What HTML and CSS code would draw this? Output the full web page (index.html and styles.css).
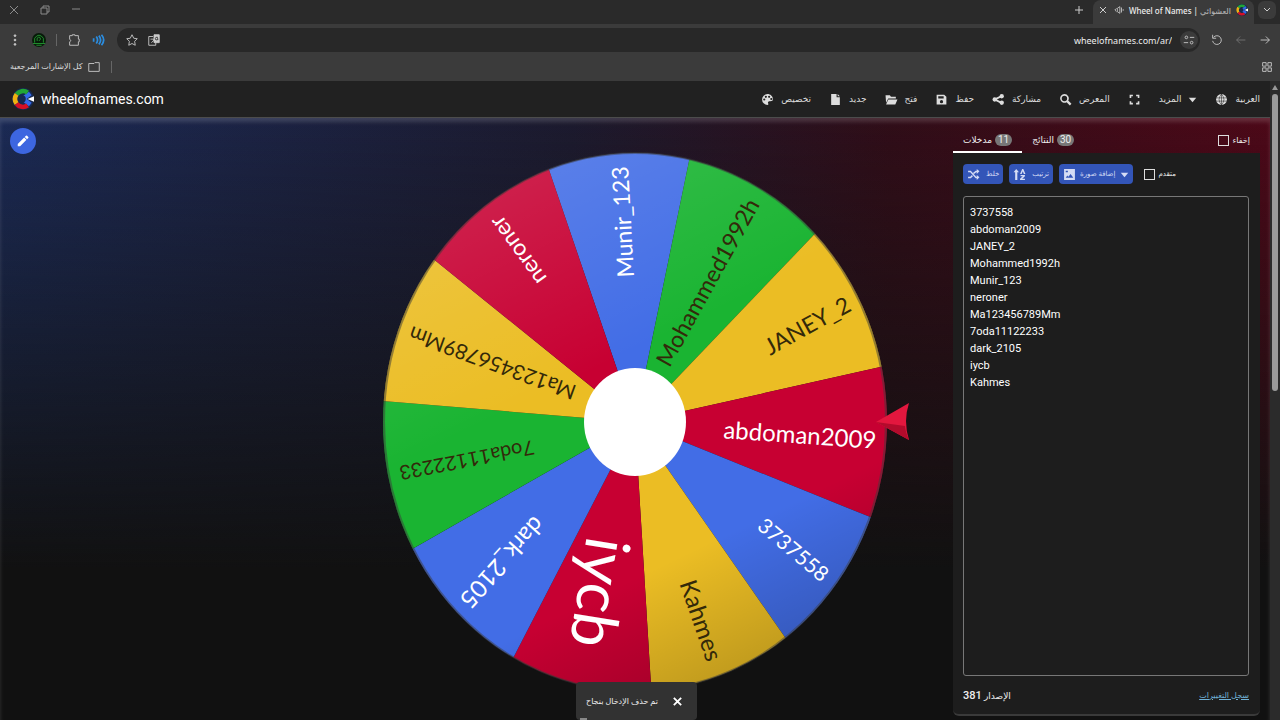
FILE: index.html
```html
<!DOCTYPE html>
<html lang="ar">

<head>
    <meta charset="UTF-8">
    <meta name="viewport" content="width=device-width, initial-scale=1.0">
    <title>Wheel of Names</title>
    <link rel="stylesheet" href="styles.css">
</head>

<body>
    <svg class="defs" aria-hidden="true">
        <symbol id="logo" viewBox="0 0 24 24">
            <circle cx="12" cy="12" r="12" fill="#16294f" />
            <g fill="none" stroke-width="5">
                <path d="M12 12l8 6" stroke="#3369e8" />
                <path d="M13 11l7-5" stroke="#3369e8" />
                <path d="M5 7A8.500 8.500 0 0 1 17 5" stroke="#22a637" />
                <path d="M5 17a8.500 8.500 0 0 1 0-10" stroke="#eeb211" />
                <path d="M17 19A8.500 8.500 0 0 1 5 17" stroke="#d50f25" />
            </g>
            <circle cx="11" cy="12" r="4" fill="#16294f" />
            <path d="M17 12l7-3v6z" fill="#fff" />
        </symbol>
    </svg>

    <!-- Browser window -->
    <div class="tab-strip">
        <div class="window-buttons">
            <button aria-label="Close window"><svg viewBox="0 0 12 12"><path d="M2 2l8 8M10 2l-8 8" /></svg></button>
            <button aria-label="Restore window"><svg viewBox="0 0 12 12"><path d="M2 4h6v6H2zM4 4V2h6v6H8" /></svg></button>
            <button aria-label="Minimize window"><svg viewBox="0 0 12 12"><path d="M2 5h8" /></svg></button>
        </div>
        <button class="new-tab" aria-label="New tab"><svg viewBox="0 0 12 12"><path d="M6 2v8M2 6h8" /></svg></button>
        <div class="tab">
            <button aria-label="Close tab"><svg viewBox="0 0 12 12"><path d="M3 3l6 6M9 3l-6 6" /></svg></button>
            <svg class="tab-sound" viewBox="0 0 12 12"><path d="M3 4L1 6l2 2M4 4v4l3 2V2zM9 3v6M11 5v2" /></svg>
            <span class="tab-title" dir="ltr">Wheel of Names | <bdi class="fade">العشوائي</bdi></span>
            <svg class="favicon"><use href="#logo" /></svg>
        </div>
        <button class="tab-menu" aria-label="Search tabs"><svg viewBox="0 0 12 12"><path d="M3 4l3 3 3-3" /></svg></button>
    </div>

    <div class="toolbar">
        <button aria-label="Menu"><svg viewBox="0 0 16 16"><g class="solid"><circle cx="8" cy="3" r="1" /><circle cx="8" cy="8" r="1" /><circle cx="8" cy="13" r="1" /></g></svg></button>
        <button class="avatar" aria-label="Profile"><svg viewBox="0 0 16 16"><circle cx="8" cy="8" r="8" fill="#071b09" stroke="none" /><path d="M3 11V6q5-7 10 0v5M6 9q-1-5 3-4 2 2-1 4M1 12h14M5 14h6" stroke="#239a31" /></svg></button>
        <span class="separator"></span>
        <button aria-label="Extensions"><svg viewBox="0 0 16 16"><path d="M3 3h3V2h3v1h4v4h1v3h-1v4H3v-4q3-1 0-3z" /></svg></button>
        <button class="volume" aria-label="Volume extension"><svg viewBox="0 0 16 16"><path d="M3 6v4M6 4q3 4 0 8M9 3q4 5 0 10M12 2q5 6 0 12" /></svg></button>
        <div class="address">
            <button aria-label="Bookmark"><svg viewBox="0 0 16 16"><path d="M8 2l2 4 4 .5-3 3 .7 4.500L8 12l-3.700 2 .7-4.500-3-3L6 6z" /></svg></button>
            <button aria-label="Translate"><svg viewBox="0 0 16 16"><path d="M7 4H2v10h8v-3M4 7h4M5 11q3-2 3-4" /><path class="solid" d="M8 2h6v9H8z" /><path d="M12.500 5q-3-1-3 1.500t3 1V6.500h-1" stroke="#333" /></svg></button>
            <input class="url" type="text" value="wheelofnames.com/ar/" aria-label="Address" dir="ltr">
            <button class="site-info" aria-label="Site information"><svg viewBox="0 0 16 16"><circle cx="5" cy="5" r="1.500" /><path d="M9 5h5M2 11h5" /><circle cx="11" cy="11" r="1.500" /></svg></button>
        </div>
        <button aria-label="Reload"><svg viewBox="0 0 16 16"><path d="M4 5a5 5 0 1 1-1 4M3 2v4h4" /></svg></button>
        <button class="dim" aria-label="Forward"><svg viewBox="0 0 16 16"><path d="M13 8H3M7 4L3 8l4 4" /></svg></button>
        <button aria-label="Back"><svg viewBox="0 0 16 16"><path d="M3 8h10M9 4l4 4-4 4" /></svg></button>
    </div>

    <div class="bookmarks">
        <button class="all-bookmarks"><span>كل الإشارات المرجعية</span><svg viewBox="0 0 16 16"><path d="M2 4h6l1-1h5v10H2z" /></svg></button>
        <span class="separator"></span>
        <button class="apps" aria-label="Apps"><svg viewBox="0 0 16 16"><path d="M3 3h4v4H3zM9 3h4v4H9zM3 9h4v4H3zM9 9h4v4H9z" /></svg></button>
    </div>

    <div class="page">
        <div class="site">
            <header class="site-header">
                <a class="brand" href="#"><svg><use href="#logo" /></svg>wheelofnames.com</a>
                <nav class="menu">
                    <button><svg viewBox="0 0 24 24"><path fill-rule="evenodd" d="M12 2a10 10 0 1 0 0 20c2 0 2-2 1-3-1-3 1-4 4-4 4 0 5-1 5-4 0-5-5-9-10-9zM6 10a2 2 0 1 1 0 4 2 2 0 0 1 0-4zm3-5a2 2 0 1 1 0 4 2 2 0 0 1 0-4zm6 0a2 2 0 1 1 0 4 2 2 0 0 1 0-4zm4 4a2 2 0 1 1 0 4 2 2 0 0 1 0-4z" /></svg><span>تخصيص</span></button>
                    <button><svg viewBox="0 0 24 24"><path d="M4 2h10v6h6v14H4zM16 2l4 4h-4z" /></svg><span>جديد</span></button>
                    <button><svg viewBox="0 0 24 24"><path d="M1 4h8l2 3h9v3H6L2 18zM6 12h17l-4 9H2z" /></svg><span>فتح</span></button>
                    <button><svg viewBox="0 0 24 24"><path fill-rule="evenodd" d="M3 3h14l4 4v14H3zM6 6v4h10V6zM12 13a3 3 0 1 0 0 6 3 3 0 0 0 0-6z" /></svg><span>حفظ</span></button>
                    <button><svg viewBox="0 0 24 24"><circle cx="5" cy="12" r="4" /><circle cx="18" cy="6" r="4" /><circle cx="18" cy="18" r="4" /><path d="M5 10l12-6 2 3-10 5 10 5-2 3-12-6z" /></svg><span>مشاركة</span></button>
                    <button><svg viewBox="0 0 24 24"><path fill-rule="evenodd" d="M10 2a8 8 0 1 0 4 15l6 6 3-3-6-6A8 8 0 0 0 10 2zm0 3a5 5 0 1 1 0 10 5 5 0 0 1 0-10z" /></svg><span>المعرض</span></button>
                    <button aria-label="ملء الشاشة"><svg viewBox="0 0 24 24"><path d="M3 3h6v3H6v3H3zM15 3h6v6h-3V6h-3zM3 15h3v3h3v3H3zM18 15h3v6h-6v-3h3z" /></svg></button>
                    <button><span>المزيد</span><svg class="arrow" viewBox="0 0 24 24"><path d="M2 7h20L12 19z" /></svg></button>
                    <button><svg viewBox="0 0 24 24"><circle cx="12" cy="12" r="10" /><path d="M2 9h20M2 15h20M12 2v20M12 2q-9 10 0 20M12 2q9 10 0 20" fill="none" stroke="#222" /></svg><span>العربية</span></button>
                </nav>
            </header>

            <main class="content">
                <div class="side">
                    <button class="edit" aria-label="تعديل"><svg viewBox="0 0 24 24"><path d="M3 17L14 6l4 4L7 21H3zM15 5l2-2q1-1 2 0l2 2q1 1 0 2l-2 2z" /></svg></button>
                </div>

                <svg class="wheel" viewBox="360 118 550 602" role="img" aria-label="Wheel of Names">
                    <defs>
                        <clipPath id="rim"><ellipse cx="635" cy="422" rx="252" ry="269" /></clipPath>
                        <linearGradient id="shade" x1="0.25" y1="0" x2="0.7" y2="1">
                            <stop offset="0" stop-color="#fff" stop-opacity="0.14" />
                            <stop offset="0.4" stop-color="#fff" stop-opacity="0" />
                            <stop offset="0.75" stop-color="#000" stop-opacity="0" />
                            <stop offset="1" stop-color="#000" stop-opacity="0.2" />
                        </linearGradient>
                    </defs>
                    <g clip-path="url(#rim)">
                        <path class="blue" d="M635 422L532 120 635 80 700 108z" />
                        <path class="green" d="M635 422L700 108 851 196z" />
                        <path class="yellow" d="M635 422L851 196 930 356z" />
                        <path class="red" d="M635 422L930 356 917 536z" />
                        <path class="blue" d="M635 422L917 536 814 679z" />
                        <path class="yellow" d="M635 422L814 679 654 735z" />
                        <path class="red" d="M635 422L654 735 490 703z" />
                        <path class="blue" d="M635 422L490 703 370 573z" />
                        <path class="green" d="M635 422L370 573 334 397z" />
                        <path class="yellow" d="M635 422L334 397 395 228z" />
                        <path class="red" d="M635 422L395 228 532 120z" />
                    </g>
                    <ellipse class="rim" cx="635" cy="422" rx="251" ry="269" fill="url(#shade)" />
                    <ellipse cx="635" cy="422" rx="51" ry="54" fill="#fff" />
                    <g class="names">
                        <text class="light" transform="translate(800 434) rotate(4)" font-size="24">abdoman2009</text>
                        <text class="light" transform="translate(794 549) rotate(40)" font-size="21">3737558</text>
                        <text transform="translate(702 620) rotate(71)" font-size="24">Kahmes</text>
                        <text class="light" transform="translate(602 593) rotate(99)" font-size="62">iycb</text>
                        <text class="light" transform="translate(503 563) rotate(132)" font-size="24">dark_2105</text>
                        <text transform="translate(467 461) rotate(169)" font-size="20">7oda11122233</text>
                        <text transform="translate(492 364) rotate(200)" font-size="21">Ma123456789Mm</text>
                        <text class="light" transform="translate(517 251) rotate(234)" font-size="23">neroner</text>
                        <text class="light" transform="translate(622 222) rotate(267)" font-size="23">Munir_123</text>
                        <text transform="translate(707 282) rotate(299)" font-size="23">Mohammed1992h</text>
                        <text transform="translate(807 325) rotate(331)" font-size="23">JANEY_2</text>
                    </g>
                    <path d="M876 422L909 403Q903 421 909 440z" fill="#e3173e" />
                    <path d="M876 422L909 440Q905 430 905 426z" fill="#b30b2c" />
                </svg>

                <section class="panel">
                    <div class="tabs">
                        <button class="panel-tab active">مدخلات <span class="count">11</span></button>
                        <button class="panel-tab">النتائج <span class="count">30</span></button>
                        <label class="check"><input type="checkbox">إخفاء</label>
                    </div>
                    <div class="card">
                        <div class="actions">
                            <button><svg viewBox="0 0 24 24"><path d="M2 5h5l10 11h1v-3l5 4-5 5v-3h-2L6 8H2zM2 16h4l3-3 2 2-4 4H2zM11 9l5-4h2V2l5 4-5 5V8h-1l-4 3z" /></svg><span>خلط</span></button>
                            <button><svg viewBox="0 0 24 24"><path d="M1 8l5-6 5 6H8v14H4V8zM13 11l4-9h2l4 9h-3l-2-5-2 5zM14 13h8v2l-5 5h5v2h-9v-2l5-5h-4z" /></svg><span>ترتيب</span></button>
                            <button class="add-image"><svg viewBox="0 0 24 24"><path fill-rule="evenodd" d="M2 2h20v20H2zM5 18h14l-5-7-4 5-2-2zM5 5v3h4V5z" /></svg><span>إضافة صورة</span><svg class="arrow" viewBox="0 0 24 24"><path d="M2 7h20L12 19z" /></svg></button>
                            <label class="check"><input type="checkbox">متقدم</label>
                        </div>
                        <textarea class="entries" aria-label="مدخلات" spellcheck="false">3737558
abdoman2009
JANEY_2
Mohammed1992h
Munir_123
neroner
Ma123456789Mm
7oda11122233
dark_2105
iycb
Kahmes</textarea>
                        <footer class="card-footer">
                            <span dir="rtl">الإصدار <span class="version">381</span></span>
                            <a href="#">سجل التغييرات</a>
                        </footer>
                    </div>
                </section>
            </main>
        </div>
        <div class="scrollbar"><span class="scroll-up"></span><span class="thumb"></span></div>
    </div>

    <div class="toast" role="status">
        <span>تم حذف الإدخال بنجاح</span>
        <button aria-label="إغلاق"><svg viewBox="0 0 12 12"><path d="M2 2l8 8M10 2l-8 8" /></svg></button>
    </div>
</body>

</html>
```
FILE: styles.css
```css
* {
    box-sizing: border-box;
}

body {
    font-family: Roboto, "DejaVu Sans", sans-serif;
    font-size: 10px;
    color: #eee;
    background-color: #111;
    margin: 0;
    height: 100vh;
    display: flex;
    flex-direction: column;
    overflow: hidden;
}

button {
    display: flex;
    align-items: center;
    font: inherit;
    color: inherit;
    background: none;
    border: none;
    padding: 0;
    cursor: pointer;
}

.defs {
    position: absolute;
    width: 0;
    height: 0;
}

/* browser window */

.tab-strip {
    display: flex;
    align-items: center;
    height: 24px;
    padding: 0 4px 4px 8px;
    background-color: #2a2a2a;
}

.tab-strip svg,
.toolbar svg,
.bookmarks svg,
.toast svg {
    width: 14px;
    height: 14px;
    fill: none;
    stroke: #ccc;
}

.tab-strip svg {
    width: 12px;
    height: 12px;
}

.tab-strip .tab-sound {
    width: 10px;
    height: 10px;
}

.tab-strip .favicon {
    stroke: none;
}

.solid {
    fill: #ccc;
}

.window-buttons {
    display: flex;
    gap: 19px;
    opacity: 0.6;
}

.new-tab {
    margin-left: auto;
}

.tab {
    display: flex;
    align-items: center;
    gap: 5px;
    height: 24px;
    margin: 0 0 -4px 8px;
    padding: 0 6px 4px 4px;
    background-color: #3b3b3b;
    border-radius: 8px 8px 0 0;
}

.tab-title {
    white-space: nowrap;
    font-family: "Noto Sans", "DejaVu Sans", sans-serif;
    font-size: 8px;
    font-weight: 500;
}

.fade {
    opacity: 0.7;
}

.tab-menu {
    width: 18px;
    height: 18px;
    margin-left: 4px;
    justify-content: center;
    background-color: #3b3b3b;
    border-radius: 6px;
}

.toolbar {
    display: flex;
    align-items: center;
    gap: 10px;
    height: 32px;
    padding: 0 8px;
    background-color: #3b3b3b;
}

.separator {
    width: 1px;
    height: 12px;
    background-color: #666;
}

.toolbar .volume svg {
    stroke: #2b8de0;
    stroke-width: 2;
}

.dim {
    opacity: 0.4;
}

.address {
    flex: 1;
    display: flex;
    align-items: center;
    gap: 8px;
    height: 24px;
    margin-left: 2px;
    padding: 0 2px 0 8px;
    background-color: #282828;
    border-radius: 12px;
}

.url {
    flex: 1;
    color: #eee;
    background: none;
    border: none;
    padding: 0;
    text-align: right;
    font-family: "Noto Sans", sans-serif;
    font-size: 9px;
}

.site-info {
    width: 18px;
    height: 18px;
    justify-content: center;
    background-color: #3b3b3b;
    border-radius: 50%;
}

.bookmarks {
    display: flex;
    align-items: center;
    gap: 10px;
    height: 25px;
    padding: 0 6px 4px 10px;
    background-color: #3b3b3b;
}

.all-bookmarks {
    gap: 4px;
    font-size: 8px;
    color: #ddd;
}

.apps {
    margin-left: auto;
}

/* site */

.page {
    flex: 1;
    display: flex;
    min-height: 0;
}

.site {
    flex: 1;
    display: flex;
    flex-direction: column;
    min-width: 0;
}

.site-header {
    display: flex;
    align-items: center;
    justify-content: space-between;
    height: 36px;
    padding: 0 10px 0 12px;
    background-color: #212121;
}

.brand {
    display: flex;
    align-items: center;
    gap: 7px;
    font-size: 14px;
    color: #fff;
    text-decoration: none;
}

.brand svg {
    width: 22px;
    height: 22px;
}

.menu {
    display: flex;
    gap: 18px;
    font-size: 9px;
    color: #ddd;
}

.menu button {
    gap: 7px;
}

.menu svg,
.actions svg {
    width: 13px;
    height: 13px;
    fill: currentColor;
}

.menu .arrow,
.actions .arrow {
    width: 9px;
    height: 9px;
}

.content {
    flex: 1;
    display: grid;
    grid-template-columns: 1fr auto 1fr;
    min-height: 0;
    border-top: 1px solid rgba(255, 255, 255, 0.25);
    box-shadow: inset 0 4px 4px rgba(255, 255, 255, 0.15);
    background: linear-gradient(to bottom, rgba(17, 17, 17, 0), #111 75%), linear-gradient(to right, #1b2a55, #1c1a2e 45%, #300d18 70%, #4d0818);
}

.side {
    padding: 10px;
}

.edit {
    width: 26px;
    height: 26px;
    justify-content: center;
    background-color: #3d66e0;
    border-radius: 50%;
}

.edit svg {
    width: 14px;
    height: 14px;
    fill: #fff;
}

.wheel {
    width: 550px;
    height: 100%;
    min-height: 0;
}

.blue {
    fill: #426de6;
}

.green {
    fill: #1ab432;
}

.yellow {
    fill: #ebbd24;
}

.red {
    fill: #c70032;
}

.rim {
    stroke: rgba(60, 60, 60, 0.5);
    stroke-width: 2;
}

.names {
    font-family: Lato, sans-serif;
    fill: #33290a;
    text-anchor: middle;
    dominant-baseline: central;
}

.names .light {
    fill: #fff;
}

.panel {
    display: flex;
    flex-direction: column;
    min-height: 0;
    padding: 10px 10px 4px 43px;
}

.tabs {
    display: flex;
    height: 25px;
    font-size: 9px;
}

.panel-tab {
    gap: 3px;
    padding: 0 10px;
    border-bottom: 2px solid transparent;
}

.panel-tab.active {
    border-bottom-color: #fff;
}

.count {
    padding: 0 3px;
    font-size: 10px;
    line-height: 12px;
    background-color: #777;
    border-radius: 6px;
}

.check {
    display: flex;
    align-items: center;
    gap: 4px;
    font-size: 8px;
}

.check input {
    appearance: none;
    width: 11px;
    height: 11px;
    margin: 0;
    border: 1px solid #ddd;
}

.tabs .check {
    margin-left: auto;
    padding-right: 10px;
}

.card {
    flex: 1;
    display: flex;
    flex-direction: column;
    min-height: 0;
    padding: 11px 11px 0 10px;
    background-color: #1d1d1d;
    border-bottom: 2px solid #3a3a3a;
    border-radius: 0 0 6px 6px;
}

.actions {
    display: flex;
    gap: 6px;
    margin-bottom: 12px;
    font-size: 7px;
}

.actions button {
    gap: 6px;
    height: 20px;
    padding: 0 4px;
    color: #d5dcf5;
    background-color: #3355b8;
    border-radius: 4px;
}

.actions .add-image {
    gap: 4px;
}

.actions .check {
    margin-left: 5px;
    font-size: 7px;
}

.entries {
    flex: 1;
    padding: 7px 6px;
    resize: none;
    font-family: Roboto, sans-serif;
    font-size: 11px;
    line-height: 17px;
    color: #fff;
    background: none;
    border: 1px solid #777;
    border-radius: 3px;
}

.card-footer {
    display: flex;
    align-items: center;
    justify-content: space-between;
    height: 38px;
    font-size: 9px;
}

.version {
    font-size: 11px;
    font-weight: 500;
}

.card-footer a {
    font-size: 8px;
    color: #6fb1d6;
}

.scrollbar {
    width: 10px;
    padding: 4px 2px;
    background-color: #2b2b2b;
}

.scroll-up {
    display: block;
    height: 5px;
    margin-bottom: 4px;
    background-color: #999;
    clip-path: polygon(50% 0, 100% 100%, 0 100%);
}

.thumb {
    display: block;
    height: 47%;
    background-color: #9a9a9a;
    border-radius: 3px;
}

/* message over the wheel */

.toast {
    position: fixed;
    left: 45%;
    bottom: 0;
    display: flex;
    align-items: center;
    gap: 14px;
    height: 38px;
    padding: 0 14px 0 10px;
    font-size: 8px;
    white-space: nowrap;
    background-color: #323232;
    border-radius: 4px;
}

/* time left before the message closes */
.toast::after {
    content: "";
    position: absolute;
    left: 4px;
    bottom: 0;
    width: 7px;
    height: 2px;
    background-color: #888;
}

.toast svg {
    width: 11px;
    height: 11px;
    stroke: #fff;
    stroke-width: 2;
}
```
